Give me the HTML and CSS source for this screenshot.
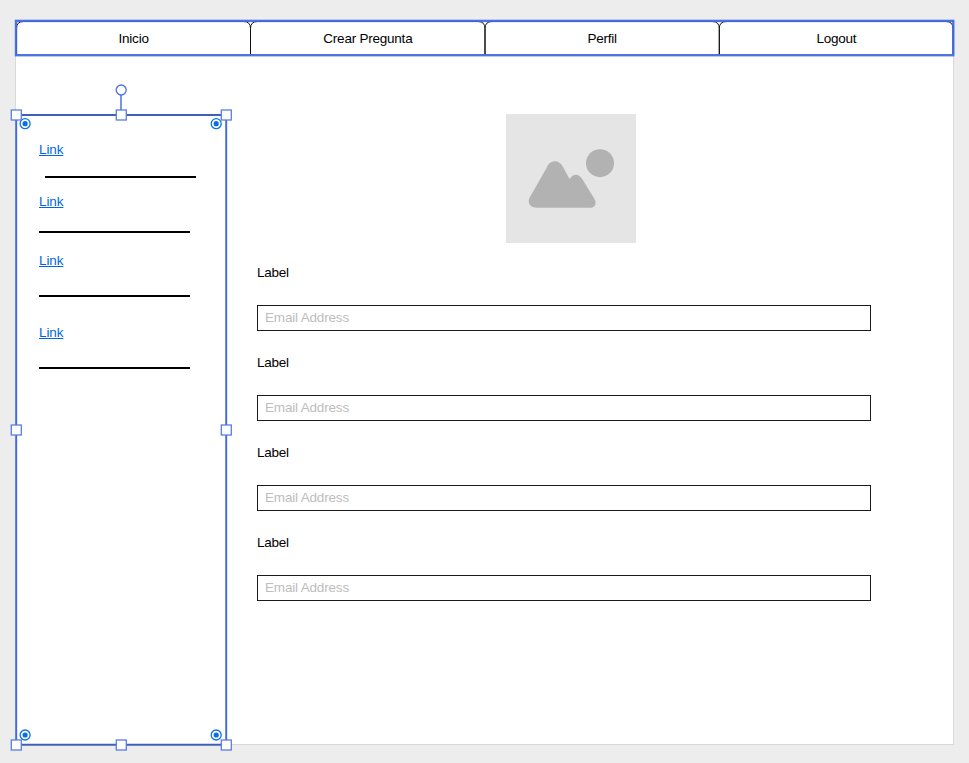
FILE: index.html
```html
<!DOCTYPE html>
<html lang="es">
<head>
<meta charset="utf-8">
<title>Crear Pregunta</title>
<link rel="stylesheet" href="styles.css">
</head>
<body>
<div class="page">
  <nav class="tabs">
    <a class="tab">Inicio</a>
    <a class="tab">Crear Pregunta</a>
    <a class="tab">Perfil</a>
    <a class="tab">Logout</a>
    <svg class="tabs-outline" width="942" height="40" viewBox="14 18 942 40" fill="none">
      <g stroke="#111" stroke-width="1">
        <path d="M16.500 55V28.500Q16.500 21.500 23.500 21.500H243.500Q250.500 21.500 250.500 28.500V55"/>
        <path d="M250.500 55V28.500Q250.500 21.500 257.500 21.500H478Q485 21.500 485 28.500V55"/>
        <path d="M485 55V28.500Q485 21.500 492 21.500H712.300Q719.300 21.500 719.300 28.500V55"/>
        <path d="M719.300 55V28.500Q719.300 21.500 726.300 21.500H946Q953 21.500 953 28.500V55"/>
      </g>
      <rect x="16" y="20.900" width="937.300" height="34.300" stroke="#4169e1" stroke-opacity=".93" stroke-width="2.400"/>
    </svg>
  </nav>
  <div class="content">
    <aside class="sidebar">
      <a class="link">Link</a>
      <hr class="rule rule-shifted">
      <a class="link link-second">Link</a>
      <hr class="rule rule-second">
      <a class="link link-third">Link</a>
      <hr class="rule rule-third">
      <a class="link link-fourth">Link</a>
      <hr class="rule rule-fourth">
      <svg class="selection" width="224" height="670" viewBox="8 82 224 670" fill="none">
        <path d="M16.200 115V745M226.200 115V745" stroke="#4169e1" stroke-width="1.900"/>
        <path d="M16 115H226M16 744.800H226" stroke="#4060b8" stroke-width="1.900"/>
        <path d="M121 95V110" stroke="#4a70e2" stroke-width="1.500"/>
        <circle cx="121.200" cy="90" r="5" fill="#fff" stroke="#4a70e2" stroke-width="1.300"/>
        <g stroke="#0a74e8" stroke-width="1.300" fill="#fff">
          <circle cx="25.100" cy="123.700" r="5"/><circle cx="216.200" cy="123.700" r="5"/>
          <circle cx="25.100" cy="735" r="5"/><circle cx="216.200" cy="735" r="5"/>
        </g>
        <g fill="#0a6fe6">
          <circle cx="25.100" cy="123.700" r="2.600"/><circle cx="216.200" cy="123.700" r="2.600"/>
          <circle cx="25.100" cy="735" r="2.600"/><circle cx="216.200" cy="735" r="2.600"/>
        </g>
        <g fill="#fff" stroke="#5a7de5" stroke-width="1.300">
          <rect x="11.300" y="110" width="10" height="10"/><rect x="116.300" y="110" width="10" height="10"/><rect x="221.300" y="110" width="10" height="10"/>
          <rect x="11.300" y="425" width="10" height="10"/><rect x="221.300" y="425" width="10" height="10"/>
          <rect x="11.300" y="740" width="10" height="10"/><rect x="116.300" y="740" width="10" height="10"/><rect x="221.300" y="740" width="10" height="10"/>
        </g>
      </svg>
    </aside>
    <main class="form">
      <div class="picture">
        <svg width="130" height="128" viewBox="506 114 130 128" fill="#b2b2b2">
          <path d="M530 197L546.500 168Q549 161.300 554.700 161.300Q560 161.300 563 167L569.600 179Q572.500 174.700 576 174.700Q579.500 174.700 582.500 179.500L594.500 199Q596.500 202 595.300 204.800Q593.800 207.800 590.500 207.800H537Q528.700 207.500 528.700 201Q528.700 199.300 530 197Z"/>
          <circle cx="600" cy="163.200" r="14"/>
        </svg>
      </div>
      <label class="field"><span class="label">Label</span><input class="input" type="text" placeholder="Email Address"></label>
      <label class="field"><span class="label">Label</span><input class="input" type="text" placeholder="Email Address"></label>
      <label class="field"><span class="label">Label</span><input class="input" type="text" placeholder="Email Address"></label>
      <label class="field"><span class="label">Label</span><input class="input" type="text" placeholder="Email Address"></label>
    </main>
  </div>
</div>
</body>
</html>
```
FILE: styles.css
```css
* { box-sizing: border-box; }
body {
  margin: 0;
  padding: 20px 15px 18px;
  background: #ededed;
  color: #000;
  font: 13.500px/16px "Liberation Sans", Arial, sans-serif;
  letter-spacing: -0.230px;
}
.page {
  width: 939px;
  height: 725px;
  background: #fff;
  border: 1px solid #d9d9d9;
}
.tabs {
  position: relative;
  display: grid;
  grid-template-columns: repeat(4, 1fr);
  height: 35px;
}
.tab {
  display: flex;
  align-items: center;
  justify-content: center;
  padding-left: 1px;
}
.tabs-outline {
  position: absolute;
  left: -2px;
  top: -3px;
}
.content {
  display: flex;
  padding-top: 58px;
}
.sidebar {
  position: relative;
  width: 211px;
  height: 630px;
  padding: 28px 0 0 23px;
}
.link {
  display: block;
  width: max-content;
  color: #0069e0;
  letter-spacing: -0.100px;
  text-decoration: underline;
  text-decoration-thickness: 1px;
}
.rule {
  width: 151px;
  height: 2px;
  margin: 18px 0 0;
  border: 0;
  background: #000;
}
.rule-shifted { margin-left: 6px; }
.link-second { margin-top: 16px; }
.rule-second { margin-top: 21px; }
.link-third { margin-top: 20px; }
.rule-third { margin-top: 26px; }
.link-fourth { margin-top: 28px; }
.rule-fourth { margin-top: 26px; }
.selection {
  position: absolute;
  left: -8px;
  top: -32px;
}
.form {
  width: 614px;
  margin-left: 30px;
}
.picture {
  width: 130px;
  height: 129px;
  margin: 0 0 22px 249px;
  background: #e5e5e5;
}
.picture svg { display: block; }
.field {
  display: flex;
  flex-direction: column;
  gap: 24px;
  height: 66px;
  margin-bottom: 24px;
}
.input {
  width: 100%;
  height: 26px;
  padding: 0 7px 1px;
  border: 1px solid #1a1a1a;
  border-radius: 0;
  background: #fff;
  font: inherit;
  letter-spacing: -0.180px;
}
.input::placeholder {
  color: #bdbdbd;
  opacity: 1;
}
```
